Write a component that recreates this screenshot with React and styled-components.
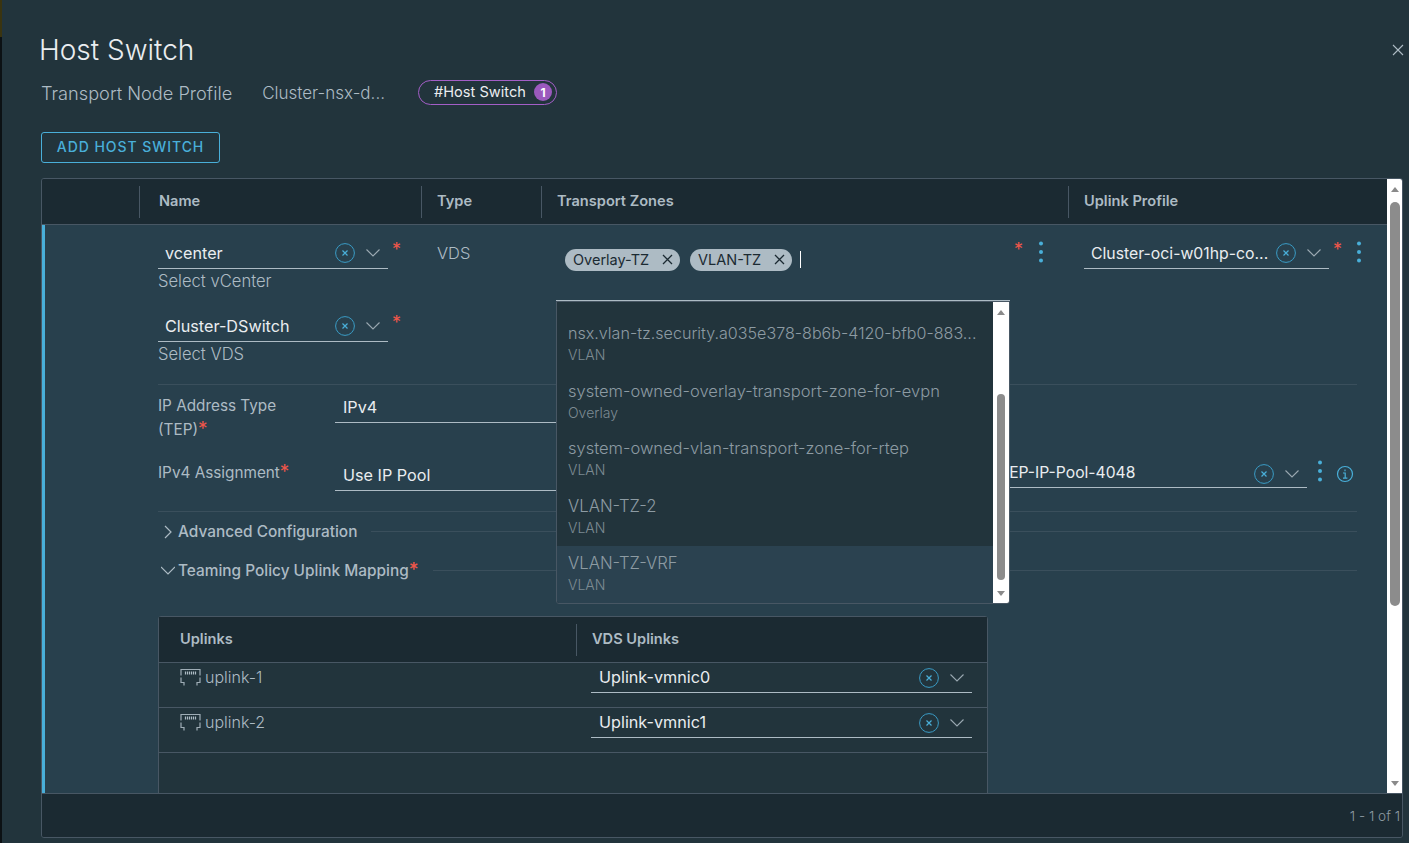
import React from 'react';
import styled, { createGlobalStyle } from 'styled-components';

const Global = createGlobalStyle`
  html, body { margin: 0; padding: 0; height: 100%; background: #22343c; overflow: hidden; }
  body { font-family: Inter, "Noto Sans", sans-serif; color: #adbbc4; }
  * { box-sizing: border-box; }
`;

const COLUMNS = '97px 282px 120px 527px 1fr';

const Page = styled.div`
  display: flex;
  width: 1409px;
  height: 843px;
`;

const Strip = styled.div`
  width: 2px;
  background: linear-gradient(#3a3410 0, #3a3410 37px, #0c1114 37px);
`;

const Modal = styled.div`
  position: relative;
  flex: 1;
  display: flex;
  flex-direction: column;
  padding: 32px 6px 5px 39px;
  background: #22343c;
`;

const Title = styled.h1`
  margin: 0 0 0 -2px;
  height: 36px;
  font-size: 28px;
  line-height: 36px;
  font-weight: 300;
  color: #eaedf0;
`;

const CloseButton = styled.button`
  position: absolute;
  top: 44px;
  right: 5px;
  width: 12px;
  height: 12px;
  padding: 0;
  display: flex;
  border: 0;
  background: none;
`;

const Crumbs = styled.div`
  display: flex;
  align-items: center;
  height: 24px;
  margin-top: 12px;
`;

const Crumb = styled.span`
  font-size: ${(p) => p.$size}px;
  font-weight: 300;
  color: #adbbc4;
  margin-right: ${(p) => p.$gap}px;
  padding-top: 2px;
`;

const Pill = styled.div`
  display: flex;
  align-items: center;
  justify-content: space-between;
  width: 139px;
  height: 25px;
  padding: 0 4px 0 15px;
  border: 1px solid #a35ec7;
  border-radius: 13px;
  font-size: 14.6px;
  color: #eaedf0;
`;

const Badge = styled.span`
  display: flex;
  align-items: center;
  justify-content: center;
  width: 18px;
  height: 18px;
  border-radius: 50%;
  background: #9a59bd;
  color: #fff;
  font-size: 12px;
  font-weight: 700;
`;

const AddButton = styled.button`
  align-self: flex-start;
  width: 179px;
  height: 31px;
  margin-top: 28px;
  padding: 0 0 3px;
  border: 1px solid #49afd9;
  border-radius: 3px;
  background: transparent;
  color: #49afd9;
  font-family: inherit;
  font-size: 14px;
  font-weight: 500;
  letter-spacing: 0.95px;
`;

const DataGrid = styled.div`
  display: flex;
  flex-direction: column;
  height: 660px;
  margin-top: 15px;
  border: 1px solid #485764;
  border-radius: 3px;
  overflow: hidden;
`;

const GridMain = styled.div`
  display: flex;
  height: 614px;
`;

const GridColumn = styled.div`
  flex: 1;
  min-width: 0;
  display: flex;
  flex-direction: column;
`;

const GridHead = styled.div`
  display: grid;
  grid-template-columns: ${COLUMNS};
  flex: 0 0 46px;
  align-items: center;
  background: #1b2a32;
  border-bottom: 1px solid #485764;
`;

const HeadCell = styled.div`
  height: 32px;
  padding-left: ${(p) => p.$pad}px;
  border-left: ${(p) => (p.$first ? 'none' : '1px solid #485764')};
  font-size: 14.6px;
  font-weight: 600;
  line-height: 30px;
  color: #adbbc4;
`;

const Scrollbar = styled.div`
  flex: 0 0 ${(p) => p.$width}px;
  display: flex;
  flex-direction: column;
  align-items: center;
  background: #fff;
`;

const Arrow = styled.span`
  flex: 0 0 20px;
  display: flex;
  align-items: center;
  justify-content: center;
  &::before {
    content: '';
    border-left: 4px solid transparent;
    border-right: 4px solid transparent;
    ${(p) => (p.$down ? 'border-top' : 'border-bottom')}: 5px solid #8a8a8a;
  }
`;

const Track = styled.div`
  flex: 1;
  width: 100%;
  display: flex;
  justify-content: center;
`;

const Thumb = styled.div`
  width: ${(p) => p.$width}px;
  height: ${(p) => p.$height}px;
  margin-top: ${(p) => p.$top}px;
  border-radius: 5px;
  background: #8c8c8c;
`;

const Row = styled.div`
  flex: 1;
  min-height: 0;
  overflow: hidden;
  border-left: 3px solid #49afd9;
  background: #28404d;
`;

const RowTop = styled.div`
  display: grid;
  grid-template-columns: 94px 282px 120px 527px 1fr;
  height: 159px;
  padding-top: 13px;
`;

const Cell = styled.div`
  position: relative;
  padding-left: ${(p) => p.$pad || 0}px;
`;

const TypeText = styled.div`
  height: 30px;
  font-size: 16.5px;
  font-weight: 300;
  line-height: 30px;
  color: #adbbc4;
`;

const FieldRow = styled.div`
  display: flex;
  align-items: flex-start;
`;

const Field = styled.div`
  display: flex;
  align-items: center;
  flex: 0 0 ${(p) => p.$width}px;
  height: ${(p) => p.$height || 31}px;
  margin-left: ${(p) => p.$left || 0}px;
  padding-left: ${(p) => p.$pad || 7}px;
  border-bottom: 1px solid #adbbc4;
`;

const FieldText = styled.span`
  flex: 1;
  min-width: 0;
  margin-bottom: ${(p) => p.$lift || 0}px;
  white-space: nowrap;
  overflow: hidden;
  font-size: ${(p) => p.$size || 16.2}px;
  color: #eaedf0;
`;

const ClearIcon = styled.svg`
  flex: none;
  width: 20px;
  height: 20px;
  margin-right: 10px;
`;

const ChevronIcon = styled.svg`
  flex: none;
  width: 16px;
  height: 10px;
  margin-right: 7px;
`;

const Star = styled.span`
  color: #f0564a;
  font-size: 18px;
  line-height: 20px;
  margin: ${(p) => p.$margin || '2px 0 0 4px'};
`;

const Kebab = styled.svg`
  flex: none;
  width: 6px;
  height: 22px;
  margin-left: ${(p) => p.$left}px;
  margin-top: ${(p) => p.$top || 0}px;
`;

const Hint = styled.div`
  margin: 3px 0 21px;
  height: 18px;
  font-size: 16.6px;
  font-weight: 300;
  line-height: 18px;
  color: #adbbc4;
`;

const ChipBox = styled.div`
  width: 454px;
  height: 63px;
  margin-left: -1px;
  padding: 11px 8px 0 9px;
  display: flex;
  align-items: flex-start;
  gap: 10px;
  border-bottom: 1px solid #adbbc4;
`;

const Chip = styled.span`
  display: flex;
  align-items: center;
  justify-content: space-between;
  width: ${(p) => p.$width}px;
  height: 22px;
  padding: 0 7px 2px 8px;
  border-radius: 11px;
  background: #adbbc4;
  color: #1b2a32;
  font-size: 14.5px;
`;

const Caret = styled.span`
  width: 1px;
  height: 17px;
  margin: 2px 0 0 -2px;
  background: #fff;
`;

const TzRow = styled.div`
  display: flex;
  align-items: flex-start;
`;

const Dropdown = styled.div`
  position: absolute;
  z-index: 5;
  top: 63px;
  left: 15px;
  display: flex;
  width: 454px;
  height: 303px;
  border: 1px solid #485764;
  border-radius: 0 0 3px 3px;
  background: #22343c;
  overflow: hidden;
`;

const OptionList = styled.div`
  flex: 1;
  min-width: 0;
  padding-top: 14px;
`;

const Option = styled.div`
  height: 57.5px;
  padding: 6px 11px 0;
  background: ${(p) => (p.$active ? '#2b4250' : 'transparent')};
`;

const OptionName = styled.div`
  font-size: ${(p) => p.$size}px;
  font-weight: 300;
  line-height: 22px;
  white-space: nowrap;
  color: #8d9ba3;
`;

const OptionSub = styled.div`
  font-size: 14px;
  font-weight: 300;
  line-height: 22.5px;
  color: #7d8b93;
`;

const Details = styled.div`
  margin: 0 30px 0 113px;
`;

const Divided = styled.div`
  border-top: 1px solid #3a4f5c;
  height: ${(p) => p.$height}px;
  padding-top: ${(p) => p.$pad || 0}px;
`;

const LabelRow = styled.div`
  display: flex;
  align-items: flex-start;
  height: ${(p) => p.$height}px;
`;

const Label = styled.div`
  flex: 0 0 177px;
  margin-top: ${(p) => p.$top || 0}px;
  font-size: 15.3px;
  line-height: 24px;
  color: #adbbc4;
`;

const LabelStar = styled.span`
  color: #f0564a;
  font-size: 19px;
  line-height: 14px;
`;

const InfoIcon = styled.svg`
  flex: none;
  width: 18px;
  height: 18px;
  margin: 5px 0 0 13px;
`;

const SectionRow = styled.div`
  display: flex;
  align-items: center;
  height: 39px;
  gap: 6px;
`;

const SectionIcon = styled.svg`
  flex: none;
  width: 14px;
  height: 14px;
  margin-left: 3px;
`;

const SectionTitle = styled.span`
  font-size: 15.4px;
  font-weight: 500;
  color: #adbbc4;
  margin-left: -3px;
  white-space: nowrap;
`;

const SectionLine = styled.div`
  flex: 1;
  height: 1px;
  background: #3a4f5c;
  margin-left: 8px;
`;

const SubGrid = styled.div`
  width: 830px;
  height: 300px;
  margin-top: 26px;
  border: 1px solid #485764;
  border-radius: 3px 3px 0 0;
  background: #22343c;
`;

const SubHead = styled.div`
  display: grid;
  grid-template-columns: 417px 1fr;
  align-items: center;
  height: 46px;
  background: #1b2a32;
  border-bottom: 1px solid #485764;
`;

const SubHeadCell = styled.div`
  height: 32px;
  padding-left: ${(p) => p.$pad}px;
  border-left: ${(p) => (p.$first ? 'none' : '1px solid #485764')};
  font-size: 14.6px;
  font-weight: 600;
  line-height: 30px;
`;

const SubRow = styled.div`
  display: grid;
  grid-template-columns: 432px 1fr;
  height: 45px;
  border-bottom: 1px solid #485764;
`;

const UplinkName = styled.div`
  display: flex;
  align-items: center;
  gap: 4px;
  height: 27px;
  padding-left: 21px;
  font-size: 16px;
  font-weight: 300;
  color: #adbbc4;
`;

const UplinkIcon = styled.svg`
  flex: none;
  width: 21px;
  height: 18px;
`;

const GridFoot = styled.div`
  flex: 1;
  display: flex;
  align-items: center;
  justify-content: flex-end;
  padding-right: 2px;
  border-top: 1px solid #485764;
  background: #1b2a32;
  font-size: 13.6px;
  font-weight: 300;
  color: #8d9ba3;
`;

function Clear() {
  return (
    <ClearIcon viewBox="0 0 20 20">
      <circle cx="10" cy="10" r="9.4" fill="none" stroke="#3a9cc6" strokeWidth="1" />
      <path d="M7.5 7.5l5 5M12.5 7.5l-5 5" stroke="#49afd9" strokeWidth="1.2" fill="none" />
    </ClearIcon>
  );
}

function Chevron() {
  return (
    <ChevronIcon viewBox="0 0 16 10">
      <path d="M1.5 1.5L8 8l6.5-6.5" stroke="#9aa8b1" strokeWidth="1.1" fill="none" />
    </ChevronIcon>
  );
}

function Dots({ left, top }) {
  return (
    <Kebab $left={left} $top={top} viewBox="0 0 6 22">
      <circle cx="3" cy="2.5" r="2" fill="#49afd9" />
      <circle cx="3" cy="11" r="2" fill="#49afd9" />
      <circle cx="3" cy="19.5" r="2" fill="#49afd9" />
    </Kebab>
  );
}

function ChipX() {
  return (
    <svg width="11" height="11" viewBox="0 0 11 11">
      <path d="M1 1l9 9M10 1l-9 9" stroke="#1b2a32" strokeWidth="1.3" />
    </svg>
  );
}

function Uplink() {
  return (
    <UplinkIcon viewBox="0 0 21 18">
      <path
        d="M1 7.5V1.5h19v6M1 9.5v5h3v3M20 9.5v5h-3v3"
        fill="none"
        stroke="#9fadb6"
        strokeWidth="1.2"
      />
      <path d="M5.5 3.5v3M7.5 3.5v3M9.5 3.5v3M11.5 3.5v3M13.5 3.5v3M15.5 3.5v3" stroke="#adbbc4" strokeWidth="1.2" />
    </UplinkIcon>
  );
}

const OPTIONS = [
  { name: 'nsx.vlan-tz.security.a035e378-8b6b-4120-bfb0-883...', sub: 'VLAN', size: 16.1 },
  { name: 'system-owned-overlay-transport-zone-for-evpn', sub: 'Overlay', size: 16.5 },
  { name: 'system-owned-vlan-transport-zone-for-rtep', sub: 'VLAN', size: 16.5 },
  { name: 'VLAN-TZ-2', sub: 'VLAN', size: 16.7 },
  { name: 'VLAN-TZ-VRF', sub: 'VLAN', size: 16.7, active: true },
];

const UPLINKS = [
  { name: 'uplink-1', value: 'Uplink-vmnic0' },
  { name: 'uplink-2', value: 'Uplink-vmnic1' },
];

export default function App() {
  return (
    <Page>
      <Global />
      <Strip />
      <Modal>
        <Title>Host Switch</Title>
        <CloseButton aria-label="Close">
          <svg width="12" height="12" viewBox="0 0 12 12">
            <path d="M1 1l10 10M11 1L1 11" stroke="#adbbc4" strokeWidth="1.1" />
          </svg>
        </CloseButton>

        <Crumbs>
          <Crumb $gap={30} $size={18.2}>Transport Node Profile</Crumb>
          <Crumb $gap={33} $size={17}>Cluster-nsx-d...</Crumb>
          <Pill>
            #Host Switch
            <Badge>1</Badge>
          </Pill>
        </Crumbs>

        <AddButton>ADD HOST SWITCH</AddButton>

        <DataGrid>
          <GridMain>
            <GridColumn>
              <GridHead>
                <HeadCell $first />
                <HeadCell $pad={19}>Name</HeadCell>
                <HeadCell $pad={15}>Type</HeadCell>
                <HeadCell $pad={15}>Transport Zones</HeadCell>
                <HeadCell $pad={15}>Uplink Profile</HeadCell>
              </GridHead>

              <Row>
                <RowTop>
                  <Cell />
                  <Cell $pad={19}>
                    <FieldRow>
                      <Field $width={230}>
                        <FieldText>vcenter</FieldText>
                        <Clear />
                        <Chevron />
                      </Field>
                      <Star>*</Star>
                    </FieldRow>
                    <Hint>Select vCenter</Hint>
                    <FieldRow>
                      <Field $width={230}>
                        <FieldText>Cluster-DSwitch</FieldText>
                        <Clear />
                        <Chevron />
                      </Field>
                      <Star>*</Star>
                    </FieldRow>
                    <Hint>Select VDS</Hint>
                  </Cell>
                  <Cell $pad={16}>
                    <TypeText>VDS</TypeText>
                  </Cell>
                  <Cell $pad={16}>
                    <TzRow>
                      <ChipBox>
                        <Chip $width={115}>
                          Overlay-TZ
                          <ChipX />
                        </Chip>
                        <Chip $width={102}>
                          VLAN-TZ
                          <ChipX />
                        </Chip>
                        <Caret />
                      </ChipBox>
                      <Star $margin="2px 0 0 4px">*</Star>
                      <Dots left={15} top={3} />
                    </TzRow>
                    <Dropdown>
                      <OptionList>
                        {OPTIONS.map((o) => (
                          <Option key={o.name} $active={o.active}>
                            <OptionName $size={o.size}>{o.name}</OptionName>
                            <OptionSub>{o.sub}</OptionSub>
                          </Option>
                        ))}
                      </OptionList>
                      <Scrollbar $width={16}>
                        <Arrow />
                        <Track>
                          <Thumb $width={8} $height={186} $top={72} />
                        </Track>
                        <Arrow $down />
                      </Scrollbar>
                    </Dropdown>
                  </Cell>
                  <Cell $pad={16}>
                    <FieldRow>
                      <Field $width={245}>
                        <FieldText $size={15.8}>Cluster-oci-w01hp-co...</FieldText>
                        <Clear />
                        <Chevron />
                      </Field>
                      <Star>*</Star>
                      <Dots left={14} top={3} />
                    </FieldRow>
                  </Cell>
                </RowTop>

                <Details>
                  <Divided $height={127} $pad={7}>
                    <LabelRow $height={68}>
                      <Label $top={2}>
                        IP Address Type
                        <br />
                        (TEP)<LabelStar>*</LabelStar>
                      </Label>
                      <Field $width={400} $pad={8}>
                        <FieldText>IPv4</FieldText>
                      </Field>
                    </LabelRow>
                    <LabelRow $height={50}>
                      <Label $top={1}>
                        IPv4 Assignment<LabelStar>*</LabelStar>
                      </Label>
                      <Field $width={400} $pad={8}>
                        <FieldText>Use IP Pool</FieldText>
                      </Field>
                      <Field $width={317} $left={255} $height={28} $pad={9}>
                        <FieldText $size={15.7} $lift={3}>TEP-IP-Pool-4048</FieldText>
                        <Clear />
                        <Chevron />
                      </Field>
                      <Dots left={10} />
                      <InfoIcon viewBox="0 0 18 18">
                        <circle cx="9" cy="9" r="7.5" fill="none" stroke="#49afd9" strokeWidth="1.2" />
                        <path d="M7 8h2.2v5M7 13.2h4.4M9 4.6v1.6" fill="none" stroke="#49afd9" strokeWidth="1.2" />
                      </InfoIcon>
                    </LabelRow>
                  </Divided>
                  <Divided $height={1} />
                  <SectionRow>
                    <SectionIcon viewBox="0 0 14 14">
                      <path d="M4 1l6 6-6 6" fill="none" stroke="#adbbc4" strokeWidth="1.2" />
                    </SectionIcon>
                    <SectionTitle>Advanced Configuration</SectionTitle>
                    <SectionLine />
                  </SectionRow>
                  <SectionRow>
                    <SectionIcon viewBox="0 0 14 14">
                      <path d="M0 3l7 7 7-7" fill="none" stroke="#adbbc4" strokeWidth="1.2" />
                    </SectionIcon>
                    <SectionTitle>
                      Teaming Policy Uplink Mapping<LabelStar>*</LabelStar>
                    </SectionTitle>
                    <SectionLine />
                  </SectionRow>
                  <SubGrid>
                    <SubHead>
                      <SubHeadCell $first $pad={21}>
                        Uplinks
                      </SubHeadCell>
                      <SubHeadCell $pad={15}>VDS Uplinks</SubHeadCell>
                    </SubHead>
                    {UPLINKS.map((u) => (
                      <SubRow key={u.name}>
                        <UplinkName>
                          <Uplink />
                          {u.name}
                        </UplinkName>
                        <FieldRow>
                          <Field $width={381} $height={30} $pad={8}>
                            <FieldText $lift={2}>{u.value}</FieldText>
                            <Clear />
                            <Chevron />
                          </Field>
                        </FieldRow>
                      </SubRow>
                    ))}
                  </SubGrid>
                </Details>
              </Row>
            </GridColumn>
            <Scrollbar $width={15}>
              <Arrow />
              <Track>
                <Thumb $width={10} $height={404} $top={3} />
              </Track>
              <Arrow $down />
            </Scrollbar>
          </GridMain>
          <GridFoot>1 - 1 of 1</GridFoot>
        </DataGrid>
      </Modal>
    </Page>
  );
}
